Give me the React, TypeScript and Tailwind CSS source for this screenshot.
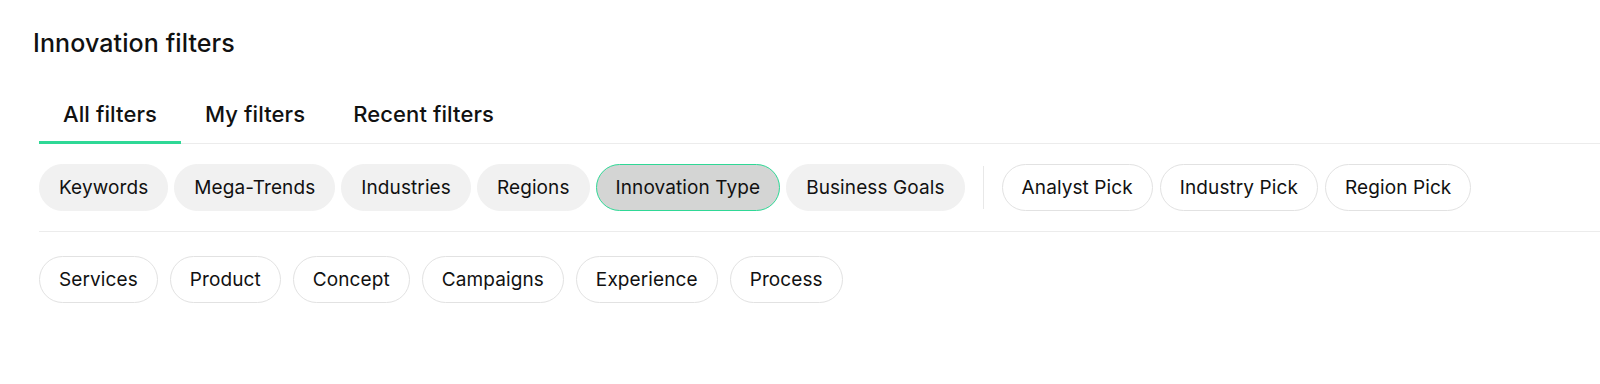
import { useState } from "react";

const categories = [
  "Keywords",
  "Mega-Trends",
  "Industries",
  "Regions",
  "Innovation Type",
  "Business Goals",
];

const picks = ["Analyst Pick", "Industry Pick", "Region Pick"];

const types = ["Services", "Product", "Concept", "Campaigns", "Experience", "Process"];

const tabs = ["All filters", "My filters", "Recent filters"];

export default function App() {
  const [tab, setTab] = useState("All filters");
  const [active, setActive] = useState("Innovation Type");

  return (
    <div
      className="min-h-[384px] w-full bg-white text-[#111111] antialiased"
      style={{ fontFamily: "Inter, 'Open Sans', sans-serif" }}
    >
      <h1 className="pl-[33px] pt-[28px] text-[25px] leading-[30px] font-medium tracking-[0.1px]">
        Innovation filters
      </h1>

      <div className="ml-[39px] mt-[28px]">
        {/* tabs */}
        <div className="flex border-b border-[#ececec]">
          {tabs.map((t) => (
            <button
              key={t}
              onClick={() => setTab(t)}
              className={
                "-mb-px px-[24px] pt-[14px] pb-[13px] text-[22px] leading-[28px] font-medium tracking-[0.1px] border-b-[3px] " +
                (tab === t ? "border-[#2fd896]" : "border-transparent")
              }
            >
              {t}
            </button>
          ))}
        </div>

        {/* categories */}
        <div className="flex items-center border-b border-[#ececec] pt-[20px] pb-[20px]">
          <div className="flex gap-[6px]">
            {categories.map((c) => (
              <button
                key={c}
                onClick={() => setActive(c)}
                className={
                  "h-[47px] rounded-full border px-[19px] text-[19px] leading-none tracking-[0.1px] " +
                  (active === c
                    ? "border-[#2fd896] bg-[#d4d5d4]"
                    : "border-[#f1f1f1] bg-[#f1f1f1]")
                }
              >
                {c}
              </button>
            ))}
          </div>
          <div className="mx-[18px] h-[43px] w-px bg-[#e8e8e8]" />
          <div className="flex gap-[7px]">
            {picks.map((p) => (
              <button
                key={p}
                className="h-[47px] rounded-full border border-[#e2e2e2] bg-white px-[19px] text-[19px] leading-none tracking-[0.1px]"
              >
                {p}
              </button>
            ))}
          </div>
        </div>

        {/* innovation types */}
        <div className="flex gap-[12px] pt-[24px]">
          {types.map((t) => (
            <button
              key={t}
              className="h-[47px] rounded-full border border-[#e2e2e2] bg-white px-[19px] text-[19px] leading-none tracking-[0.1px]"
            >
              {t}
            </button>
          ))}
        </div>
      </div>
    </div>
  );
}
